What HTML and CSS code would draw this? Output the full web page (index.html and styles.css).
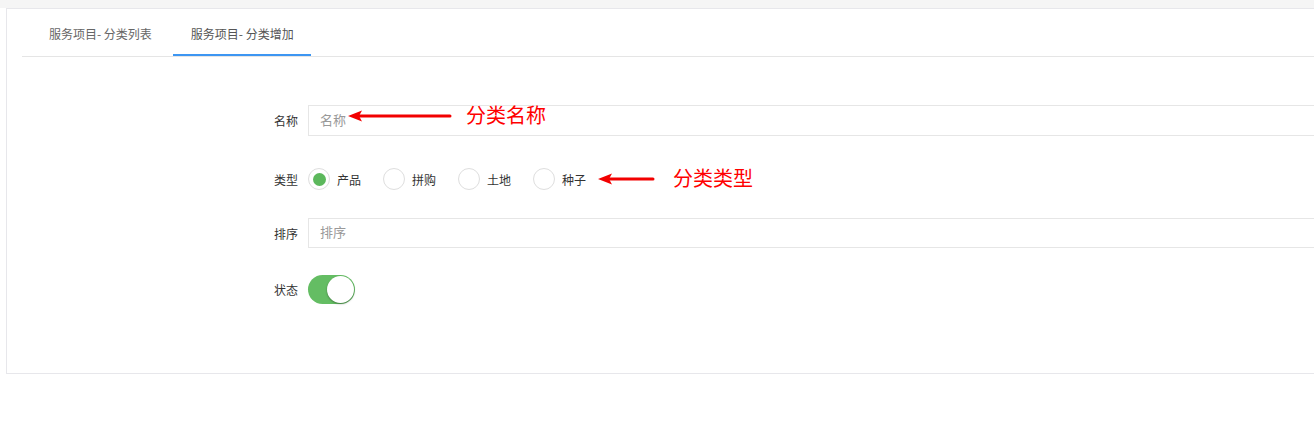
FILE: index.html
```html
<!DOCTYPE html>
<html lang="zh">
<head>
<meta charset="utf-8">
<link rel="stylesheet" href="styles.css">
</head>
<body>
<div class="topbar"></div>
<div class="card">
  <div class="tabs">
    <div class="tab">服务项目- 分类列表</div>
    <div class="tab active">服务项目- 分类增加</div>
  </div>
  <div class="form">
    <div class="row row-name">
      <label class="lbl">名称</label>
      <div class="input"><span class="ph">名称</span></div>
    </div>
    <div class="row row-type">
      <label class="lbl">类型</label>
      <div class="radios">
        <span class="radio checked"></span><span class="rtext">产品</span>
        <span class="radio"></span><span class="rtext">拼购</span>
        <span class="radio"></span><span class="rtext">土地</span>
        <span class="radio"></span><span class="rtext">种子</span>
      </div>
    </div>
    <div class="row row-sort">
      <label class="lbl">排序</label>
      <div class="input"><span class="ph">排序</span></div>
    </div>
    <div class="row row-state">
      <label class="lbl">状态</label>
      <span class="switch"><span class="knob"></span></span>
    </div>
  </div>
</div>

<svg class="arrow arrow1" width="106" height="14" viewBox="0 0 106 14">
  <path d="M12 7 H103" stroke="#f20000" stroke-width="3" stroke-linecap="round"/>
  <path d="M1 7 L15 1.5 L12 7 L15 12.5 Z" fill="#f20000"/>
</svg>
<div class="note note1">分类名称</div>

<svg class="arrow arrow2" width="60" height="14" viewBox="0 0 60 14">
  <path d="M12 7 H56" stroke="#f20000" stroke-width="3" stroke-linecap="round"/>
  <path d="M1 7 L15 1.5 L12 7 L15 12.5 Z" fill="#f20000"/>
</svg>
<div class="note note2">分类类型</div>
</body>
</html>
```

FILE: styles.css
```css
* { box-sizing: border-box; }
html, body { margin: 0; padding: 0; }
body {
  width: 1314px;
  height: 424px;
  overflow: hidden;
  background: #fff;
  font-family: "Noto Sans CJK SC", "Noto Sans", sans-serif;
  font-size: 12px;
  color: #333;
  position: relative;
}
.topbar {
  height: 8px;
  background: #f5f5f5;
}
.card {
  margin-left: 6px;
  width: 1500px;
  height: 366px;
  border: 1px solid #e7e7eb;
  padding: 0 15px;
  background: #fff;
}
.tabs {
  display: flex;
  padding-left: 9px;
  border-bottom: 1px solid #e5e5e5;
}
.tab {
  padding: 15px 18px 10px;
  line-height: 20px;
  height: 47px;
  color: #666;
  border-bottom: 2px solid transparent;
  margin-right: 3px;
}
.tab.active {
  border-bottom-color: #3d96f2;
  color: #555;
  padding-right: 17px;
}
.form {
  padding-top: 48px;
  display: flex;
  flex-direction: column;
}
.row {
  display: flex;
  align-items: center;
}
.lbl {
  width: 276px;
  text-align: right;
  margin-right: 10px;
  color: #333;
  font-size: 12px;
}
.input {
  flex: 1;
  border: 1px solid #e6e6e6;
  display: flex;
  align-items: center;
  padding-left: 11px;
  padding-bottom: 2px;
}
.ph {
  color: #999;
  font-size: 13px;
  line-height: 18px;
}
.row-name { height: 31px; margin-bottom: 27px; }
.row-name .input { height: 31px; }
.row-type { height: 32px; margin-bottom: 23px; }
.row-sort { height: 30px; margin-bottom: 27px; }
.row-sort .input { height: 30px; }
.row-state { height: 29px; }
.radios {
  display: flex;
  align-items: center;
}
.radio {
  width: 22px;
  height: 22px;
  border-radius: 50%;
  border: 1px solid #dedede;
  background: #fff;
  display: flex;
  align-items: center;
  justify-content: center;
  margin-right: 7px;
}
.radio.checked::after {
  content: "";
  width: 13px;
  height: 13px;
  border-radius: 50%;
  background: #5cb85c;
}
.rtext {
  width: 24px;
  margin-right: 22px;
  color: #333;
}
.switch {
  width: 47px;
  height: 29px;
  border-radius: 15px;
  background: #64bd63;
  display: flex;
  justify-content: flex-end;
  align-items: center;
  padding-right: 1px;
}
.knob {
  width: 27px;
  height: 27px;
  border-radius: 50%;
  background: #fff;
  box-shadow: 0 1px 2px rgba(0,0,0,0.35);
}
.arrow { position: absolute; }
.arrow1 { left: 347px; top: 109px; }
.arrow2 { left: 597px; top: 172px; }
.note {
  position: absolute;
  color: #ff0000;
  font-size: 20px;
  line-height: 24px;
}
.note1 { left: 466px; top: 103px; }
.note2 { left: 673px; top: 166px; }
```
